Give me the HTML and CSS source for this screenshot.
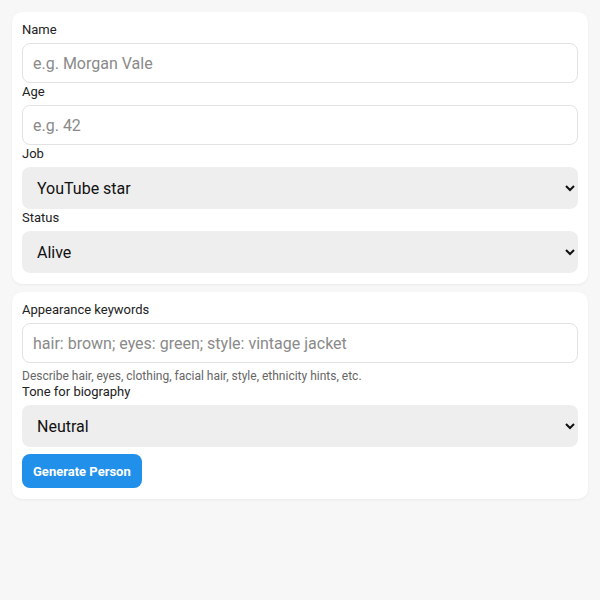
FILE: index.html
```html
<!DOCTYPE html>
<html lang="en">
<head>
  <meta charset="UTF-8">
  <meta name="viewport" content="width=device-width, initial-scale=1.0">
  <title>Person Generator</title>
  <link rel="stylesheet" href="styles.css">
</head>
<body>
  <div class="card">
    <label for="name">Name</label>
    <input type="text" id="name" placeholder="e.g. Morgan Vale">
    <label for="age">Age</label>
    <input type="number" id="age" placeholder="e.g. 42">
    <label for="job">Job</label>
    <select id="job">
      <option>YouTube star</option>
      <option>Chef</option>
      <option>Pilot</option>
    </select>
    <label for="status">Status</label>
    <select id="status">
      <option>Alive</option>
      <option>Deceased</option>
    </select>
  </div>
  <div class="card">
    <label for="looks">Appearance keywords</label>
    <input type="text" id="looks" placeholder="hair: brown; eyes: green; style: vintage jacket">
    <div class="hint">Describe hair, eyes, clothing, facial hair, style, ethnicity hints, etc.</div>
    <label for="tone">Tone for biography</label>
    <select id="tone">
      <option>Neutral</option>
      <option>Funny</option>
      <option>Dramatic</option>
    </select>
    <button type="button">Generate Person</button>
  </div>
</body>
</html>
```

FILE: styles.css
```css
body { font-family: Roboto, "Noto Sans", sans-serif; margin: 0; padding: 12px; background: #f7f7f7; color: #222; }
.card { background: #fff; border-radius: 10px; padding: 9px 10px 11px; margin-bottom: 8px; box-shadow: 0 1px 3px rgba(0,0,0,0.05); }
label { display: block; font-size: 13px; line-height: 18px; margin-bottom: 4px; color: #222; }
input, select { display: block; width: 100%; box-sizing: border-box; font-family: inherit; font-size: 16px; border-radius: 8px; }
input { height: 40px; padding: 0 10px; border: 1px solid #e2e2e2; background: #fff; color: #222; }
input::placeholder { color: #8a8a8a; }
select { height: 42px; padding: 0 10px 0 11px; border: none; background: #eeeeee; color: #111; }
.hint { font-size: 12px; color: #666; line-height: 14px; margin-top: 6px; }
button { margin-top: 7px; padding: 0 11px; height: 34px; border: none; border-radius: 8px; background: #2190ea; color: #fff; font-family: inherit; font-size: 13px; font-weight: 700; cursor: pointer; }
```
